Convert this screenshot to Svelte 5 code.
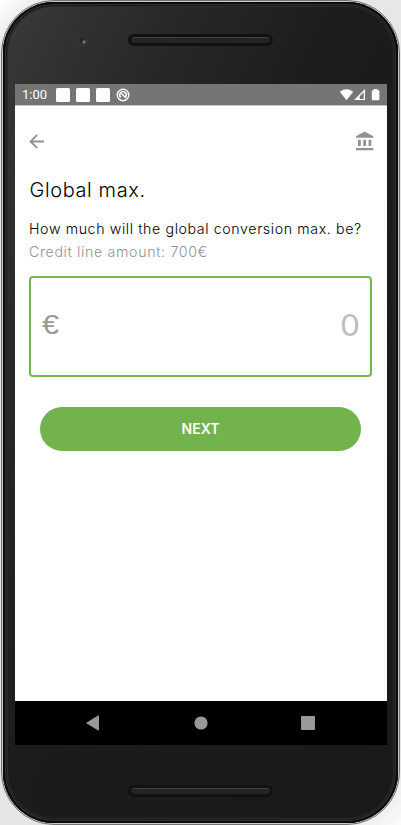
<script>
  let amount = $state('');
</script>

<div class="scene">
  <div class="phone">
    <div class="bezel">
      <div class="forehead">
        <span class="camera"></span>
        <span class="speaker"></span>
      </div>

      <div class="screen">
        <div class="status">
          <span class="time">1:00</span>
          <span class="square"></span>
          <span class="square"></span>
          <span class="square"></span>
          <svg class="dnd" width="14" height="14" viewBox="0 0 14 14" fill="none" stroke="#fff">
            <circle cx="7" cy="7" r="5.8" stroke-width="1.4" />
            <path d="M4.7 9.4A3.3 3.3 0 1 1 9.9 8.6M5.6 5.6L10 10" stroke-width="1.5" />
          </svg>
          <svg class="signals" width="42" height="14" viewBox="0 0 42 14" fill="#fff">
            <path d="M.8 3.7Q7.5-1.2 14.2 3.7L7.5 12.2Z" />
            <path d="M26 1V12.1H15ZM24.7 4.3L20.7 8.3V10.9H24.7Z" fill-rule="evenodd" />
            <path d="M34.7 2.2V1h3.8v1.2h1.1q.8 0 .8.8v8.5q0 .8-.8.8h-6q-.8 0-.8-.8V3q0-.8.8-.8Z" />
          </svg>
        </div>

        <main>
          <header>
            <svg width="16" height="16" viewBox="0 0 16 16" fill="none" stroke="#929292" stroke-width="1.8">
              <path d="M15 8.5H2M8.2 1.8L1.5 8.5l6.7 6.7" />
            </svg>
            <svg width="20" height="20" viewBox="0 0 20 20" fill="#929292">
              <path d="M1 5.3L9.6.6 18.3 5.3V6.8H1ZM3 8.7h2.8v6.2H3ZM8.3 8.7h2.8v6.2H8.3ZM13.6 8.7h2.7v6.2h-2.7ZM1 16.9h17.3v2.4H1Z" />
            </svg>
          </header>
          <h1>Global max.</h1>
          <p class="question">How much will the global conversion max. be?</p>
          <p class="credit">Credit line amount: 700€</p>
          <label class="field">
            <span>€</span>
            <input bind:value={amount} placeholder="0" inputmode="decimal" aria-label="Amount" />
          </label>
          <button>NEXT</button>
        </main>

        <nav>
          <svg width="14" height="16" viewBox="0 0 14 16"><path d="M13 .8v14.2q0 .7-.8.4L.7 8.5q-.8-.6 0-1.1L12.2.5q.8-.4.8.3Z" fill="#999" /></svg>
          <svg width="14" height="14" viewBox="0 0 14 14"><circle cx="7" cy="7" r="6.6" fill="#999" /></svg>
          <svg width="14" height="14" viewBox="0 0 14 14"><rect width="14" height="14" rx="1" fill="#999" /></svg>
        </nav>
      </div>

      <div class="chin"><span class="speaker"></span></div>
    </div>
  </div>
</div>

<style>
  :global(body) { margin: 0; background: #f1f1f2; }
  * { box-sizing: border-box; }
  .scene {
    width: 401px;
    height: 825px;
    overflow: hidden;
    padding: 0 0 0 1px;
    background: linear-gradient(135deg, #fff 0, #e8e8e8 4%, #e4e4e5 94%, #fafbfd 100%);
    font-family: Inter, "Noto Sans", sans-serif;
  }
  .phone {
    width: 399px;
    height: 825px;
    padding: 1px;
    border: 1px solid #737373;
    border-radius: 53px;
    background: #c9c9c9;
  }
  .bezel {
    display: flex;
    flex-direction: column;
    height: 821px;
    padding: 0 12px;
    border-radius: 51px;
    background: linear-gradient(115deg, #3a3a3a 0, #282828 23%, #1c1c1c 45%, #191919 100%);
    box-shadow: inset 0 0 0 2px #0b0b0b, inset 0 0 0 3px #303030, inset 0 0 0 4px #1b1b1b, inset 0 0 0 5px #2b2b2b;
  }
  .forehead { position: relative; height: 82px; flex: none; }
  .camera {
    position: absolute;
    left: 61px;
    top: 32px;
    width: 13px;
    height: 13px;
    border: 3px solid #353334;
    border-radius: 50%;
    background: radial-gradient(circle at 75% 75%, #986768 0 12%, #292638 35%, #242332);
  }
  .speaker {
    display: block;
    width: 145px;
    height: 12px;
    margin: 0 auto;
    border: 3px solid #111;
    border-radius: 6px;
    background: #242424;
    box-shadow: inset 0 1px #414141;
  }
  .forehead .speaker { position: relative; top: 32px; }
  .screen { display: flex; flex-direction: column; width: 372px; height: 661px; background: #fff; flex: none; }
  .status { display: flex; align-items: center; height: 21px; padding: 0 6px 0 7px; background: #757575; color: #fff; flex: none; }
  .time { width: 34px; font: 13px/21px Roboto, sans-serif; letter-spacing: 0; }
  .square { width: 14px; height: 14px; margin-right: 6px; border-radius: 1.5px; background: #fff; }
  .signals { margin-left: auto; }
  main { display: flex; flex-direction: column; height: 596px; padding: 0 15px 0 14px; border-top: 1px solid #c8c8c8; }
  header { display: flex; align-items: center; justify-content: space-between; height: 70px; margin-right: -3px; flex: none; }
  h1 { margin: 0; font-size: 20px; line-height: 28px; font-weight: 300; letter-spacing: .6px; white-space: nowrap; align-self: flex-start; padding-left: .5px; }
  p { margin: 0; font-size: 14.2px; line-height: 23px; white-space: nowrap; font-weight: 300; align-self: flex-start; }
  .question { margin-top: 13px; letter-spacing: .61px; color: #000; }
  .credit { color: #929292; letter-spacing: .66px; }
  .field { display: flex; align-items: center; width: 343px; height: 101px; margin-top: 13px; padding: 0 11px 2px 12px; border: 2px solid #76b550; border-radius: 4px; color: #999; font-size: 27px; }
  .field span { font-family: "Liberation Sans", sans-serif; font-size: 27px; transform: scaleX(1.14); }
  .field input { min-width: 0; flex: 1; padding: 0 0 4px; border: 0; outline: 0; background: none; font: 400 31px Lato, sans-serif; text-align: right; }
  .field input::placeholder { color: #bdbdbd; opacity: 1; }
  button { width: 321px; height: 44px; margin: 30px 0 0 11px; padding: 0 0 2px; border: 0; border-radius: 22px; background: #73b34d; color: #fff; font: 600 14px Inter, sans-serif; }
  nav { display: flex; align-items: center; justify-content: space-between; height: 44px; padding: 0 72px 0 71px; background: #000; flex: none; }
  .chin { padding-top: 40px; }
</style>
